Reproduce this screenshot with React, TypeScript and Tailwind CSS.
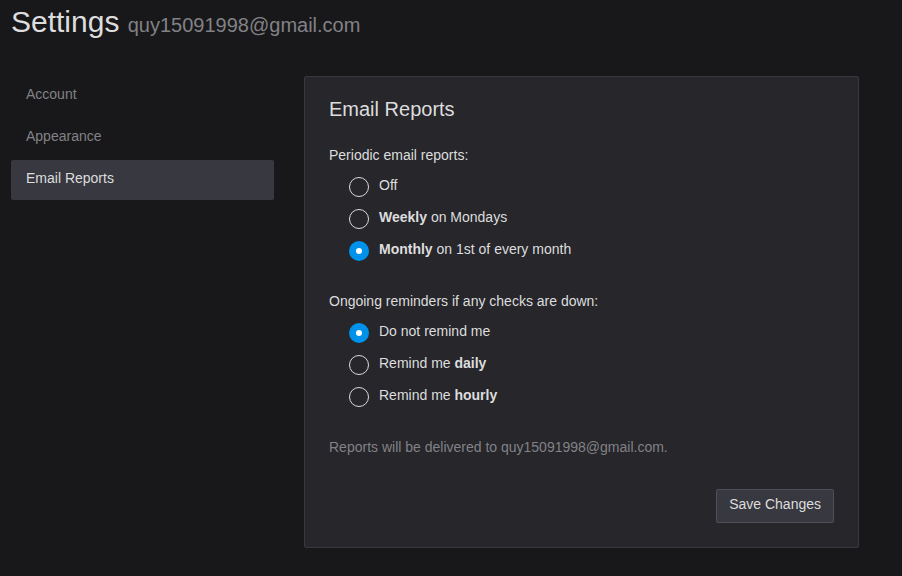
import React from "react";

const navItems = ["Account", "Appearance", "Email Reports"];

function Option({
  name,
  value,
  checked,
  children,
}: {
  name: string;
  value: string;
  checked?: boolean;
  children: React.ReactNode;
}) {
  return (
    <label className="flex h-8 items-start pl-5">
      <input
        type="radio"
        name={name}
        value={value}
        defaultChecked={checked}
        className="mt-1 size-5 shrink-0 appearance-none rounded-full border border-[#dddddd] checked:border-[7px] checked:border-[#0091ea] checked:bg-white"
      />
      <span className="ml-2.5 leading-6">{children}</span>
    </label>
  );
}

export default function App() {
  return (
    <div className="min-h-screen bg-[#18181a] font-['Liberation_Sans',Arial,sans-serif] text-sm text-[#dddddd]">
      <h1 className="px-[11px] pt-1 text-3xl leading-9">
        Settings <small className="text-xl leading-none text-[#828286]">quy15091998@gmail.com</small>
      </h1>
      <div className="flex pt-9">
        <nav className="w-[274px] shrink-0 pl-[11px]">
          <ul className="flex flex-col gap-0.5">
            {navItems.map((item) => (
              <li key={item}>
                <a
                  href="#"
                  className={
                    item === "Email Reports"
                      ? "block h-10 rounded-xs bg-[#383840] px-[15px] pt-2 leading-5 text-[#dddddd]"
                      : "block h-10 rounded-xs px-[15px] pt-2 leading-5 text-[#828286]"
                  }
                >
                  {item}
                </a>
              </li>
            ))}
          </ul>
        </nav>
        <main className="mr-[43px] ml-[30px] flex-1 rounded-xs border border-[#383840] bg-[#26262b] p-6">
          <form>
            <h2 className="-mt-1 text-xl leading-6">Email Reports</h2>
            <fieldset className="mt-6">
              <legend className="mb-2 leading-5">Periodic email reports:</legend>
              <Option name="reports" value="off">Off</Option>
              <Option name="reports" value="weekly"><b>Weekly</b> on Mondays</Option>
              <Option name="reports" value="monthly" checked><b>Monthly</b> on 1st of every month</Option>
            </fieldset>
            <fieldset className="mt-[22px]">
              <legend className="mb-2 leading-5">Ongoing reminders if any checks are down:</legend>
              <Option name="nag" value="none" checked>Do not remind me</Option>
              <Option name="nag" value="daily">Remind me <b>daily</b></Option>
              <Option name="nag" value="hourly">Remind me <b>hourly</b></Option>
            </fieldset>
            <p className="mt-[22px] leading-5 text-[#828286]">Reports will be delivered to quy15091998@gmail.com.</p>
            <div className="mt-8 flex justify-end">
              <button type="submit" className="h-[34px] rounded-xs border border-[#4f4f59] bg-[#383840] px-3 pb-1 leading-5">
                Save Changes
              </button>
            </div>
          </form>
        </main>
      </div>
    </div>
  );
}
